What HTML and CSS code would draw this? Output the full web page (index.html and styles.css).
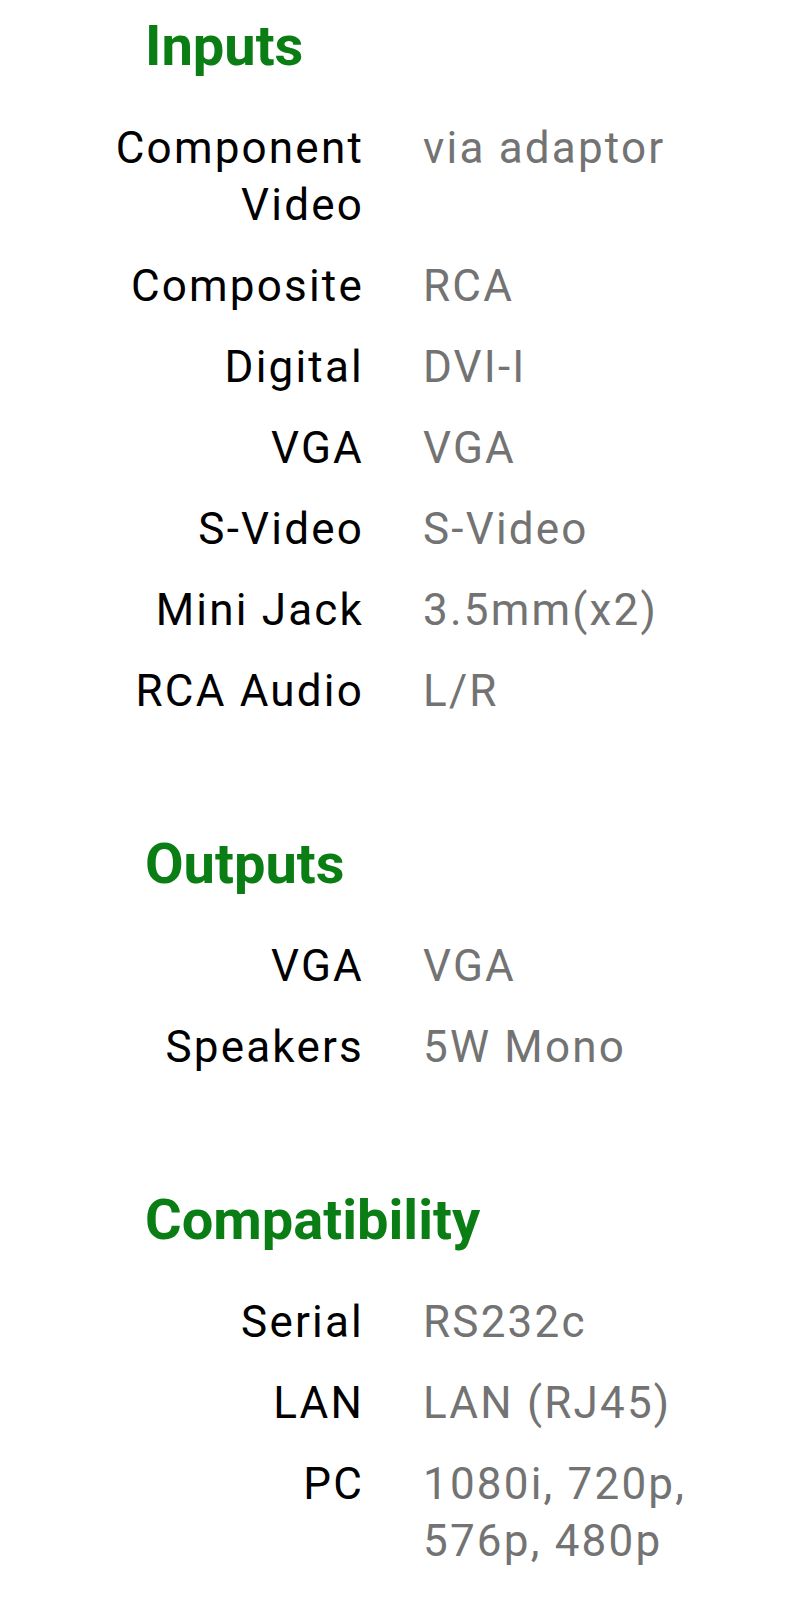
FILE: index.html
```html
<!DOCTYPE html>
<html>
<head>
	<meta charset="utf-8">
	<meta name="viewport" content="width=device-width, initial-scale=1">
	<title>Specifications</title>
	<link rel="stylesheet" href="styles.css">
</head>
<body>
	<div class="specs">

		<!-- inputs -->
		<div class="group">
			<h2 class="groupTitle">Inputs</h2>
			<div class="table">
				<div class="label">Component Video</div>
				<div class="value">via adaptor</div>
				<div class="label">Composite</div>
				<div class="value">RCA</div>
				<div class="label">Digital</div>
				<div class="value">DVI-I</div>
				<div class="label">VGA</div>
				<div class="value">VGA</div>
				<div class="label">S-Video</div>
				<div class="value">S-Video</div>
				<div class="label">Mini Jack</div>
				<div class="value">3.5mm(x2)</div>
				<div class="label">RCA Audio</div>
				<div class="value">L/R</div>
			</div>
		</div>

		<!-- outputs -->
		<div class="group">
			<h2 class="groupTitle">Outputs</h2>
			<div class="table">
				<div class="label">VGA</div>
				<div class="value">VGA</div>
				<div class="label">Speakers</div>
				<div class="value">5W Mono</div>
			</div>
		</div>

		<!-- compatibility -->
		<div class="group">
			<h2 class="groupTitle">Compatibility</h2>
			<div class="table">
				<div class="label">Serial</div>
				<div class="value">RS232c</div>
				<div class="label">LAN</div>
				<div class="value">LAN (RJ45)</div>
				<div class="label">PC</div>
				<div class="value">1080i, 720p, 576p, 480p</div>
			</div>
		</div>

	</div>
</body>
</html>
```

FILE: styles.css
```css
body {
	margin: 0;
	padding: 0;
	background-color: white;
	font-family: Roboto, "Noto Sans", sans-serif;
}

.specs {
	padding-top: 13px;
	padding-bottom: 30px;
}

.group + .group {
	margin-top: 111px;
}

.groupTitle {
	margin: 0 0 41px 145px;
	font-size: 56px;
	line-height: 66px;
	font-weight: bold;
	color: #0a7d14;
}

.table {
	display: grid;
	grid-template-columns: 302px 1fr;
	column-gap: 59px;
	row-gap: 24px;
	padding-left: 62px;
	padding-right: 10px;
	font-size: 44px;
	line-height: 57px;
	letter-spacing: 2.2px;
}

.label {
	text-align: right;
	color: black;
}

.value {
	color: #737373;
}
```
